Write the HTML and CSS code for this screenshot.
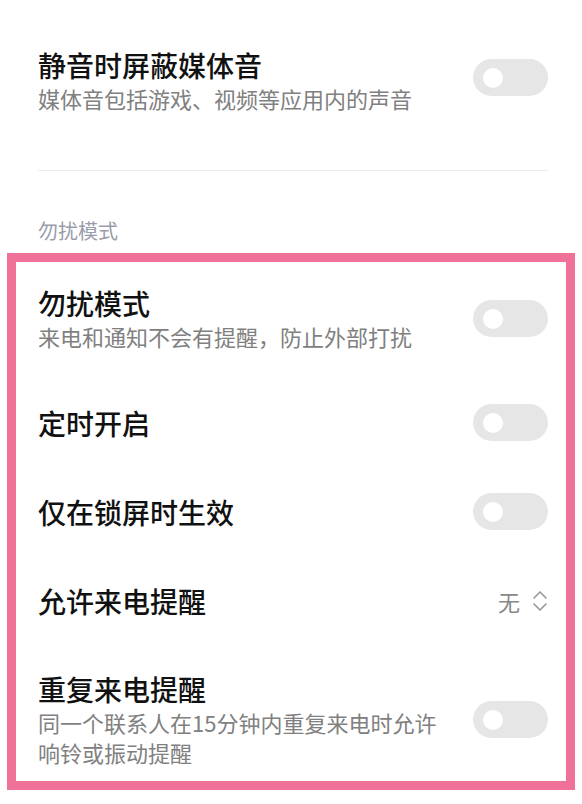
FILE: index.html
```html
<!DOCTYPE html>
<html lang="zh-CN">
<head>
<meta charset="utf-8">
<link rel="stylesheet" href="styles.css">
</head>
<body>
<div class="page">
  <div class="top-row">
    <div class="text">
      <div class="title">静音时屏蔽媒体音</div>
      <div class="sub">媒体音包括游戏、视频等应用内的声音</div>
    </div>
    <div class="switch switch-top"><span class="knob"></span></div>
  </div>
  <div class="divider"></div>
  <div class="section-label">勿扰模式</div>
  <div class="box">
    <div class="row row-first">
      <div class="text">
        <div class="title">勿扰模式</div>
        <div class="sub">来电和通知不会有提醒，防止外部打扰</div>
      </div>
      <div class="switch"><span class="knob"></span></div>
    </div>
    <div class="row row-single">
      <div class="text"><div class="title">定时开启</div></div>
      <div class="switch"><span class="knob"></span></div>
    </div>
    <div class="row row-single">
      <div class="text"><div class="title">仅在锁屏时生效</div></div>
      <div class="switch"><span class="knob"></span></div>
    </div>
    <div class="row row-single">
      <div class="text"><div class="title">允许来电提醒</div></div>
      <div class="picker">
        <span class="picker-value">无</span>
        <svg class="updown" width="16" height="24" viewBox="0 0 16 24" fill="none" stroke="#9a9a9a" stroke-width="1.7" stroke-linecap="round" stroke-linejoin="round">
          <path d="M2 9 L8 3 L14 9"/>
          <path d="M2 15 L8 21 L14 15"/>
        </svg>
      </div>
    </div>
    <div class="row row-last">
      <div class="text">
        <div class="title">重复来电提醒</div>
        <div class="sub">同一个联系人在15分钟内重复来电时允许响铃或振动提醒</div>
      </div>
      <div class="switch"><span class="knob"></span></div>
    </div>
  </div>
</div>
</body>
</html>
```
FILE: styles.css
```css
html, body {
  margin: 0;
  padding: 0;
  background: #ffffff;
}
body {
  font-family: "Noto Sans CJK SC", "Noto Sans", sans-serif;
  width: 582px;
}
.page {
  padding-top: 48px;
}
.top-row {
  display: flex;
  align-items: center;
  padding: 0 34px 0 38px;
}
.text {
  flex: 1;
  min-width: 0;
  padding-right: 20px;
}
.title {
  font-size: 28px;
  line-height: 34px;
  font-weight: 500;
  color: #111111;
}
.sub {
  font-size: 22px;
  line-height: 30px;
  margin-top: 1px;
  color: #808080;
}
.switch {
  flex: none;
  width: 75px;
  height: 37px;
  border-radius: 19px;
  background: #e6e6e6;
  display: flex;
  align-items: center;
  padding-left: 10px;
  box-sizing: border-box;
}
.switch-top {
  margin-bottom: 6px;
}
.knob {
  width: 20px;
  height: 20px;
  border-radius: 50%;
  background: #ffffff;
}
.divider {
  margin: 57px 34px 0 38px;
  height: 1px;
  background: #ececec;
}
.section-label {
  margin: 46px 0 0 38px;
  font-size: 20px;
  line-height: 28px;
  color: #9a9cab;
}
.box {
  margin: 8px 7px 0;
  border: 9px solid #ef7197;
}
.row {
  display: flex;
  align-items: center;
  padding: 0 18px 0 22px;
}
.row-first {
  padding-top: 24px;
  padding-bottom: 27px;
}
.row-single {
  min-height: 89px;
}
.row-last {
  padding-top: 27px;
  padding-bottom: 14px;
}
.picker {
  display: flex;
  align-items: center;
  gap: 12px;
}
.picker-value {
  font-size: 22px;
  line-height: 30px;
  color: #888888;
}
.updown {
  display: block;
}
```
